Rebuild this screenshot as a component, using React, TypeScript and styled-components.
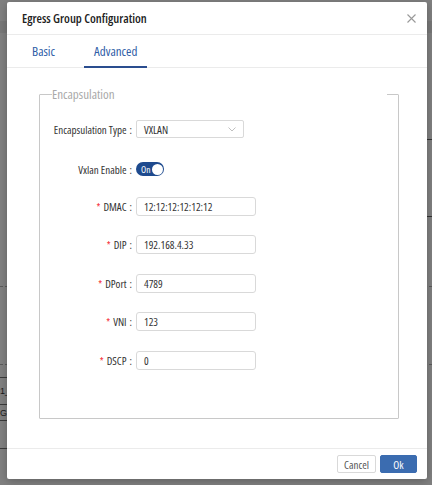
import React from "react";
import styled, { createGlobalStyle } from "styled-components";

const FONT = `"Open Sans", Lato, sans-serif`;

const Global = createGlobalStyle`
  html, body { margin: 0; padding: 0; }
  body {
    width: 432px; height: 485px; overflow: hidden;
    background: #808080;
    font-family: ${FONT};
  }
`;

const Stage = styled.div`
  position: relative;
  width: 432px;
  height: 485px;
  overflow: hidden;
`;

const BackPage = styled.div`
  display: flex;
  width: 432px;
`;

const BackCol = styled.div`
  flex: 1;
  display: flex;
  flex-direction: column;
`;

const BackRow = styled.div<{ $h: number; $bg?: string; $line?: string }>`
  height: ${(p) => p.$h}px;
  background: ${(p) => p.$bg || "transparent"};
  border-bottom: ${(p) => p.$line || "none"};
  box-sizing: border-box;
  font-family: "Liberation Sans", sans-serif;
  font-size: 9px;
  color: #1a1a1a;
  line-height: ${(p) => p.$h}px;
`;

const Modal = styled.div`
  position: absolute;
  left: 7px;
  top: 2px;
  width: 420px;
  height: 477px;
  background: #fff;
  border-radius: 2px;
  box-shadow: 0 2px 8px rgba(0, 0, 0, 0.25);
  display: flex;
  flex-direction: column;
  font-family: ${FONT};
  font-stretch: 75%;
`;

const Header = styled.div`
  height: 32px;
  display: flex;
  align-items: center;
  justify-content: space-between;
  padding: 0 10px 0 15px;
  border-bottom: 1px solid #ebebeb;
`;

const Title = styled.div`
  font-size: 12.5px;
  font-weight: 600;
  color: #222;
`;

const Close = styled.div`
  width: 12px;
  height: 12px;
  display: flex;
  align-items: center;
  justify-content: center;
`;

const Tabs = styled.div`
  height: 32px;
  display: flex;
  gap: 19px;
  padding-left: 15px;
  border-bottom: 1px solid #ebebeb;
`;

const Tab = styled.div<{ $active?: boolean }>`
  padding: 0 10px;
  display: flex;
  align-items: center;
  font-size: 13px;
  color: #2f5da6;
  box-sizing: border-box;
  border-bottom: 2px solid ${(p) => (p.$active ? "#2a4d8f" : "transparent")};
  margin-bottom: -1px;
`;

const Body = styled.div`
  flex: 1;
  padding: 19px 28px 29px 32px;
  display: flex;
`;

const Fieldset = styled.fieldset`
  flex: 1;
  margin: 0;
  padding: 17px 0 0 12px;
  border: 1px solid #c8c8c8;
  border-radius: 1px;
  display: flex;
  flex-direction: column;
  min-width: 0;
`;

const Legend = styled.legend`
  width: 335px;
  padding: 0;
  font-size: 13px;
  color: #a9a9a9;
  line-height: 14px;
`;

const Row = styled.div<{ $mt?: number }>`
  display: flex;
  align-items: center;
  height: 20px;
  margin-top: ${(p) => p.$mt ?? 0}px;
`;

const Label = styled.label`
  width: 80px;
  text-align: right;
  font-size: 11px;
  color: #333;
  white-space: nowrap;
  flex-shrink: 0;
`;

const Req = styled.span`
  color: #f5222d;
  margin-right: 3px;
  font-size: 10px;
`;

const Colon = styled.span`
  margin-left: 3px;
`;

const Field = styled.div`
  margin-left: 4px;
`;

const Input = styled.div`
  width: 120px;
  height: 19px;
  box-sizing: border-box;
  border: 1px solid #d9d9d9;
  border-radius: 3px;
  padding: 0 7px;
  display: flex;
  align-items: center;
  font-size: 11px;
  color: #333;
`;

const Select = styled(Input)`
  width: 108px;
  height: 18px;
  border-radius: 2px;
  justify-content: space-between;
`;

const Switch = styled.div`
  width: 28px;
  height: 14px;
  border-radius: 7px;
  background: #1e4a8e;
  display: flex;
  align-items: center;
  justify-content: space-between;
  padding: 0 1.5px 0 5px;
  box-sizing: border-box;
  font-size: 9.5px;
  color: #fff;
`;

const Knob = styled.div`
  width: 11px;
  height: 11px;
  border-radius: 50%;
  background: #fff;
`;

const Footer = styled.div`
  height: 31px;
  border-top: 1px solid #ebebeb;
  display: flex;
  align-items: center;
  justify-content: flex-end;
  gap: 4px;
  padding-right: 10px;
  box-sizing: border-box;
`;

const Button = styled.button<{ $primary?: boolean }>`
  height: 18px;
  padding: 0 6px;
  min-width: 37px;
  border-radius: 2px;
  font-family: inherit;
  font-stretch: inherit;
  font-size: 11px;
  cursor: pointer;
  border: 1px solid ${(p) => (p.$primary ? "#3b6cb0" : "#d9d9d9")};
  background: ${(p) => (p.$primary ? "#3b6cb0" : "#fff")};
  color: ${(p) => (p.$primary ? "#fff" : "#555")};
`;

const fields = [
  { label: "DMAC", value: "12:12:12:12:12:12" },
  { label: "DIP", value: "192.168.4.33" },
  { label: "DPort", value: "4789" },
  { label: "VNI", value: "123" },
  { label: "DSCP", value: "0" },
];

export default function App() {
  return (
    <Stage>
      <Global />
      <BackPage>
        <BackCol>
          <BackRow $h={21} />
          <BackRow $h={12} $bg="#787878" />
          <BackRow $h={254} $line="1px dashed #5a5a5a" />
          <BackRow $h={78} $line="1px dashed #5a5a5a" />
          <BackRow $h={13} $line="1px solid #3a3a3a" />
          <BackRow $h={27} $line="1px solid #3a3a3a">1_</BackRow>
          <BackRow $h={16} $line="1px solid #3a3a3a">G1</BackRow>
          <BackRow $h={28} $line="1px solid #3a3a3a" />
        </BackCol>
        <BackCol>
          <BackRow $h={21} />
          <BackRow $h={12} $bg="#787878" />
          <BackRow $h={107} $line="1px solid #333" />
          <BackRow $h={77} $line="1px solid #333" />
          <BackRow $h={70} $line="1px dashed #5a5a5a" />
          <BackRow $h={78} $line="1px dashed #5a5a5a" />
        </BackCol>
      </BackPage>
      <Modal>
        <Header>
          <Title>Egress Group Configuration</Title>
          <Close>
            <svg width="9" height="9" viewBox="0 0 9 9">
              <path d="M0.5 0.5 L8.5 8.5 M8.5 0.5 L0.5 8.5" stroke="#999" strokeWidth="1.1" />
            </svg>
          </Close>
        </Header>
        <Tabs>
          <Tab>Basic</Tab>
          <Tab $active>Advanced</Tab>
        </Tabs>
        <Body>
          <Fieldset>
            <Legend>Encapsulation</Legend>
            <Row $mt={1}>
              <Label>
                Encapsulation Type<Colon>:</Colon>
              </Label>
              <Field>
                <Select>
                  <span>VXLAN</span>
                  <svg width="8" height="5" viewBox="0 0 8 5">
                    <path d="M0.5 0.5 L4 4 L7.5 0.5" fill="none" stroke="#c0c0c0" strokeWidth="1" />
                  </svg>
                </Select>
              </Field>
            </Row>
            <Row $mt={20}>
              <Label>
                Vxlan Enable<Colon>:</Colon>
              </Label>
              <Field>
                <Switch>
                  <span>On</span>
                  <Knob />
                </Switch>
              </Field>
            </Row>
            {fields.map((f, i) => (
              <Row key={f.label} $mt={i === 0 ? 17 : 18.5}>
                <Label>
                  <Req>*</Req>
                  {f.label}
                  <Colon>:</Colon>
                </Label>
                <Field>
                  <Input>{f.value}</Input>
                </Field>
              </Row>
            ))}
          </Fieldset>
        </Body>
        <Footer>
          <Button>Cancel</Button>
          <Button $primary>Ok</Button>
        </Footer>
      </Modal>
    </Stage>
  );
}
